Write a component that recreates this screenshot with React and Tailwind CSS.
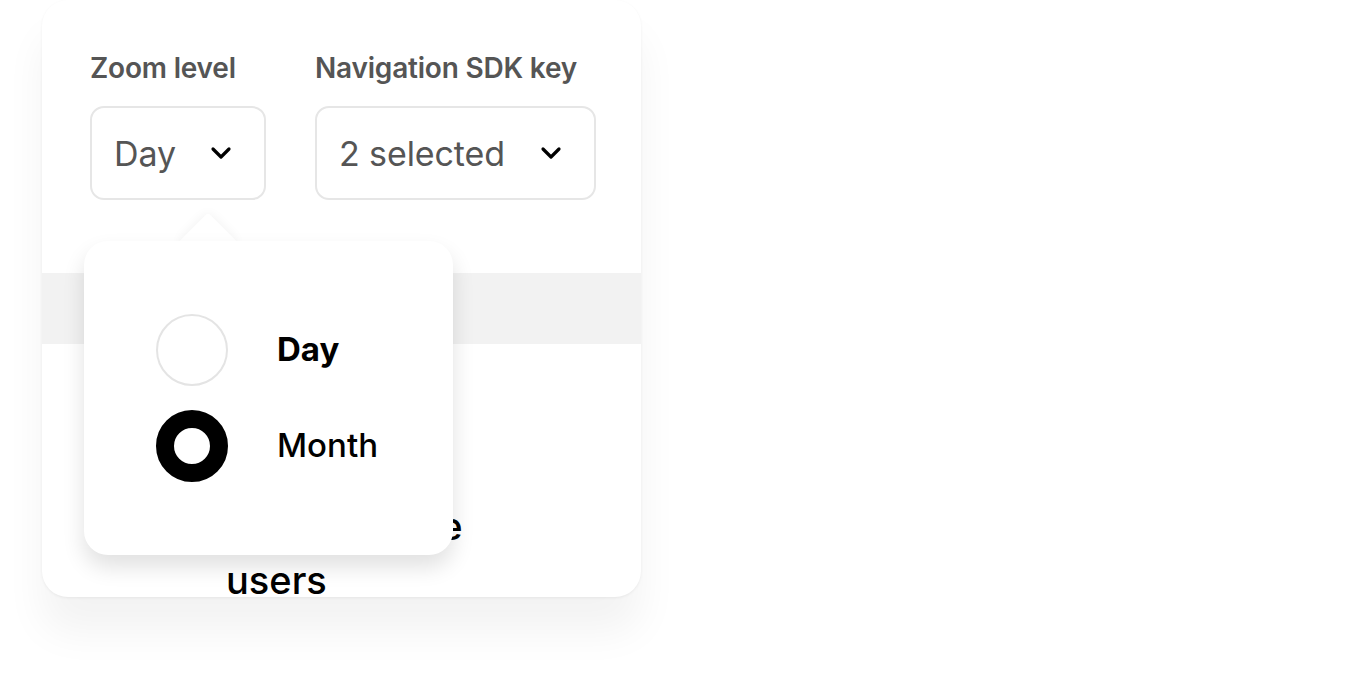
import { useState } from 'react'

const FONT = { fontFamily: 'Inter, "Noto Sans", sans-serif' }

function Chevron() {
  return (
    <svg width="22" height="14" viewBox="0 0 22 14" fill="none">
      <path d="M3 3l8 8 8-8" stroke="#000" strokeWidth="3.2" strokeLinecap="round" strokeLinejoin="round" />
    </svg>
  )
}

function Select({ label, value, width }) {
  return (
    <div className="flex flex-col">
      <span className="text-[28px] font-semibold text-[#555] tracking-[-0.2px] leading-[30px] h-[30px] mt-[53px]">{label}</span>
      <div
        className={`mt-[23px] h-[94px] ${width} rounded-[14px] border-2 border-[#e6e6e6] flex items-center justify-between pl-[22px] pr-[32px] bg-white`}
      >
        <span className="text-[34px] text-[#555] tracking-[-0.1px]">{value}</span>
        <Chevron />
      </div>
    </div>
  )
}

function Radio({ checked, label }) {
  return (
    <div className="flex items-center h-[72px]">
      {checked ? (
        <div className="w-[72px] h-[72px] rounded-full border-[18px] border-black bg-white" />
      ) : (
        <div className="w-[72px] h-[72px] rounded-full border-2 border-[#e4e4e4] bg-white" />
      )}
      <span className={`ml-[49px] text-[33px] text-black ${checked ? 'font-medium' : 'font-bold'}`}>{label}</span>
    </div>
  )
}

export default function App() {
  const [zoom] = useState('Month')
  return (
    <div className="w-[1368px] h-[699px] bg-white overflow-hidden" style={FONT}>
      <div className="pl-[42px]">
        <div className="relative w-[599px] h-[597px] rounded-[26px] bg-white shadow-[0_1px_3px_rgba(0,0,0,0.06),0_35px_40px_rgba(0,0,0,0.05)]">
          <div className="h-full w-full rounded-[26px] overflow-hidden">
            <div className="flex gap-[49px] pl-[48px]">
              <Select label="Zoom level" value="Day" width="w-[176px]" />
              <Select label="Navigation SDK key" value="2 selected" width="w-[281px]" />
            </div>
            <div className="mt-[73px] h-[71px] bg-[#f2f2f2]" />
            <div className="mt-[155px] pl-[184px] text-[38px] font-medium leading-[54px] text-black flex flex-col">
              <span className="tracking-[-1.4px]">Weekly active</span>
              <span className="tracking-[0px]">users</span>
            </div>
          </div>

          {/* popover */}
          <div className="absolute left-[42px] top-[241px] w-[369px] h-[314px]">
            <div className="absolute left-[103px] top-[-20px] w-[42px] h-[42px] rotate-45 bg-white rounded-[4px] shadow-[0_0_12px_rgba(0,0,0,0.06)]" />
            <div className="relative h-full w-full rounded-[24px] bg-white shadow-[0_12px_22px_rgba(0,0,0,0.12)] pl-[72px] pt-[73px] flex flex-col gap-[24px]">
              <Radio checked={zoom === 'Day'} label="Day" />
              <Radio checked={zoom === 'Month'} label="Month" />
            </div>
          </div>
        </div>
      </div>
    </div>
  )
}
